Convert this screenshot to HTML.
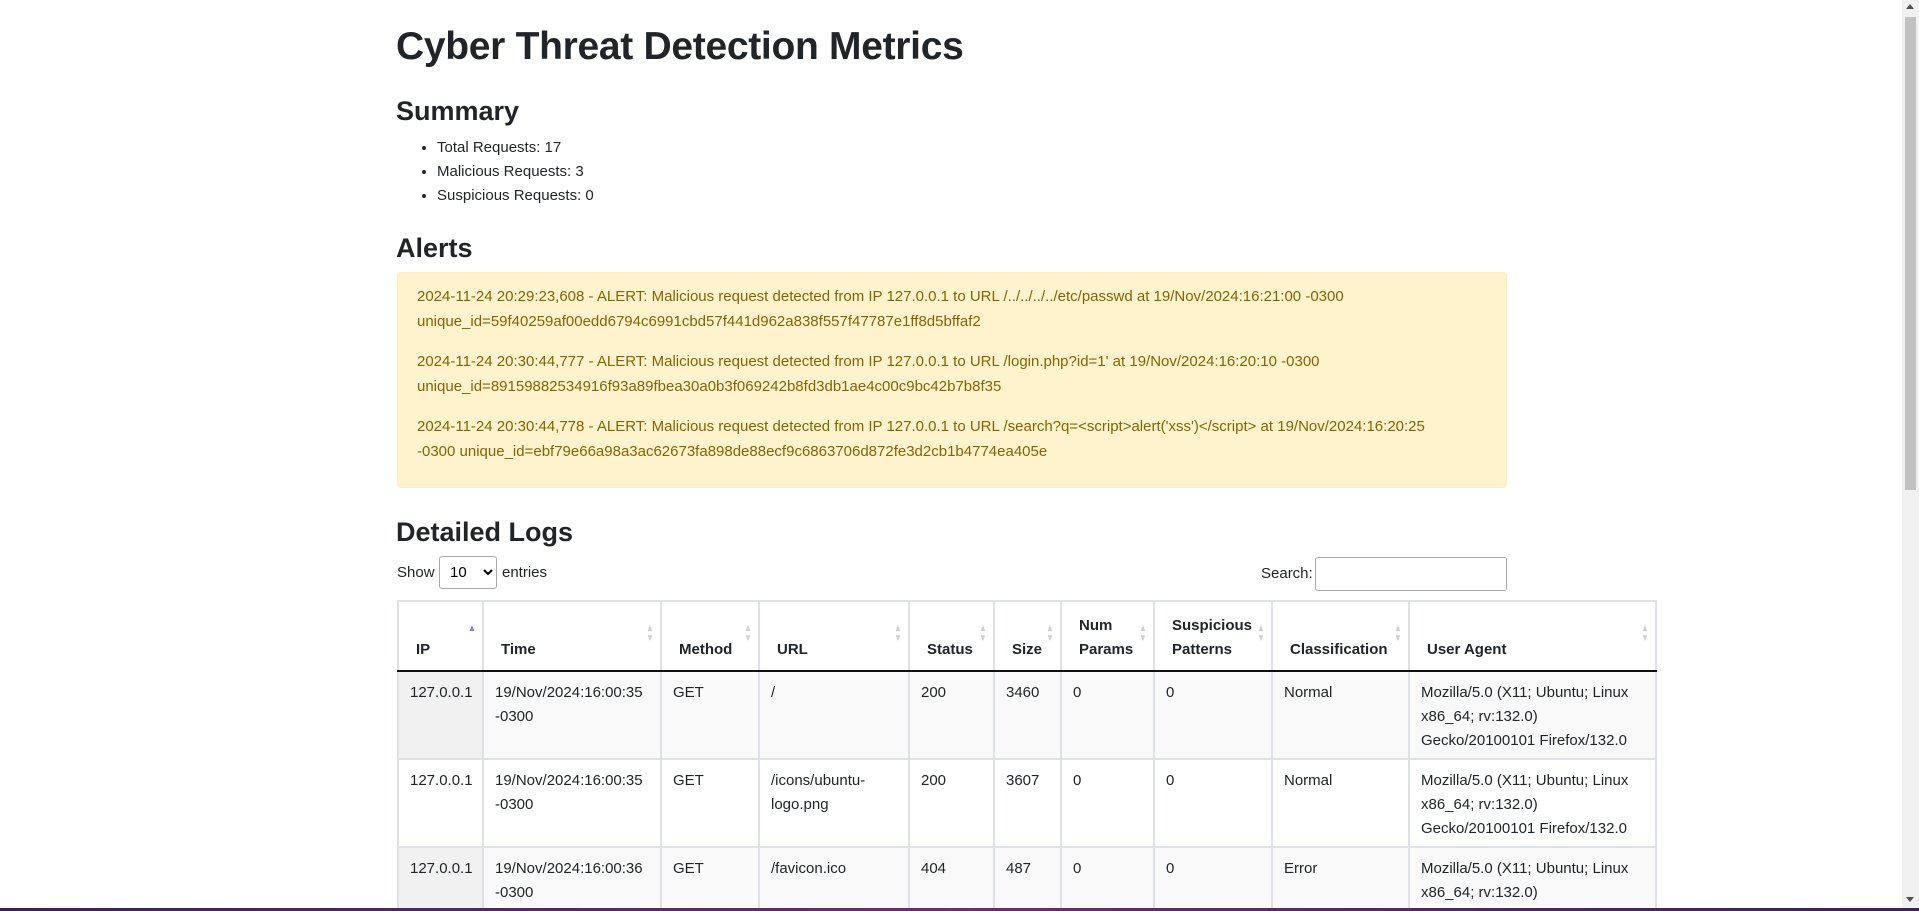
<!DOCTYPE html>
<html><head><meta charset="utf-8"><style>
*{box-sizing:border-box}
html,body{margin:0;padding:0;width:1919px;height:911px;overflow:hidden;background:#fff;font-family:"Liberation Sans",sans-serif;color:#212529}
#w{position:relative;width:1919px;height:911px;overflow:hidden}
.a{position:absolute;margin:0}
h1{font-size:39px;font-weight:600;line-height:48px;letter-spacing:-0.3px}
h3{font-size:27px;font-weight:600;line-height:34px}
ul{padding-left:40px;font-size:15px;line-height:24px}
.alert{left:397px;top:272px;width:1110px;height:216px;background:#fff3cd;border:1px solid #ffeeba;border-radius:4px;color:#856404;padding:12px 19px 11px;font-size:15px;line-height:24.5px;white-space:nowrap}
.alert p{margin:0 0 16px}
.ctl{font-size:15px;line-height:24px}
select{position:absolute;left:439px;top:556px;width:58px;height:33px;border:1px solid #aaa;border-radius:3px;background:#fff;font:15px "Liberation Sans",sans-serif;padding-left:6px}
.inp{left:1315px;top:557px;width:192px;height:34px;border:1px solid #aaa;border-radius:3px}
table{position:absolute;left:397px;top:600px;border-collapse:collapse;table-layout:fixed;width:1258px;font-size:15px;border:2px solid #dee2e6}
th,td{border:2px solid #dee2e6;text-align:left;vertical-align:top;white-space:nowrap;line-height:24px}
th{vertical-align:bottom;height:70px;border-bottom:2px solid #111;position:relative;font-weight:700;padding:8px 11px 8px 17px}
td{height:86px;padding:9px 11px 5px}
tr.o td{background:#f9f9f9}
tr.o td.s{background:#f1f1f1}
.srt{position:absolute;right:5px;top:22px;font-size:10px;line-height:10px;color:#cfcfcf;transform:scaleX(0.8)}
.srt.act{color:#7783d6}
</style></head><body><div id="w">
<h1 class="a" style="left:396px;top:23px">Cyber Threat Detection Metrics</h1>
<h3 class="a" style="left:396px;top:94px">Summary</h3>
<ul class="a" style="left:397px;top:136px"><li>Total Requests: 17</li><li>Malicious Requests: 3</li><li>Suspicious Requests: 0</li></ul>
<h3 class="a" style="left:396px;top:231px">Alerts</h3>
<div class="a alert">
<p>2024-11-24 20:29:23,608 - ALERT: Malicious request detected from IP 127.0.0.1 to URL /../../../../etc/passwd at 19/Nov/2024:16:21:00 -0300<br>unique_id=59f40259af00edd6794c6991cbd57f441d962a838f557f47787e1ff8d5bffaf2</p>
<p>2024-11-24 20:30:44,777 - ALERT: Malicious request detected from IP 127.0.0.1 to URL /login.php?id=1' at 19/Nov/2024:16:20:10 -0300<br>unique_id=89159882534916f93a89fbea30a0b3f069242b8fd3db1ae4c00c9bc42b7b8f35</p>
<p>2024-11-24 20:30:44,778 - ALERT: Malicious request detected from IP 127.0.0.1 to URL /search?q=&lt;script&gt;alert('xss')&lt;/script&gt; at 19/Nov/2024:16:20:25<br>-0300 unique_id=ebf79e66a98a3ac62673fa898de88ecf9c6863706d872fe3d2cb1b4774ea405e</p>
</div>
<h3 class="a" style="left:396px;top:515px">Detailed Logs</h3>
<div class="a ctl" style="left:397px;top:561px">Show</div>
<select><option>10</option></select>
<div class="a ctl" style="left:502px;top:561px">entries</div>
<div class="a ctl" style="left:1261px;top:562px">Search:</div>
<div class="a inp"></div>
<table>
<colgroup><col style="width:85px"><col style="width:178px"><col style="width:98px"><col style="width:150px"><col style="width:85px"><col style="width:67px"><col style="width:93px"><col style="width:118px"><col style="width:137px"><col style="width:247px"></colgroup>
<tr><th>IP<span class="srt act">▲</span></th><th>Time<span class="srt">▲<br>▼</span></th><th>Method<span class="srt">▲<br>▼</span></th><th>URL<span class="srt">▲<br>▼</span></th><th>Status<span class="srt">▲<br>▼</span></th><th>Size<span class="srt">▲<br>▼</span></th><th>Num<br>Params<span class="srt">▲<br>▼</span></th><th>Suspicious<br>Patterns<span class="srt">▲<br>▼</span></th><th>Classification<span class="srt">▲<br>▼</span></th><th>User Agent<span class="srt">▲<br>▼</span></th></tr>
<tr class="o"><td class="s">127.0.0.1</td><td>19/Nov/2024:16:00:35<br>-0300</td><td>GET</td><td>/</td><td>200</td><td>3460</td><td>0</td><td>0</td><td>Normal</td><td>Mozilla/5.0 (X11; Ubuntu; Linux<br>x86_64; rv:132.0)<br>Gecko/20100101 Firefox/132.0</td></tr>
<tr><td class="s">127.0.0.1</td><td>19/Nov/2024:16:00:35<br>-0300</td><td>GET</td><td>/icons/ubuntu-<br>logo.png</td><td>200</td><td>3607</td><td>0</td><td>0</td><td>Normal</td><td>Mozilla/5.0 (X11; Ubuntu; Linux<br>x86_64; rv:132.0)<br>Gecko/20100101 Firefox/132.0</td></tr>
<tr class="o"><td class="s">127.0.0.1</td><td>19/Nov/2024:16:00:36<br>-0300</td><td>GET</td><td>/favicon.ico</td><td>404</td><td>487</td><td>0</td><td>0</td><td>Error</td><td>Mozilla/5.0 (X11; Ubuntu; Linux<br>x86_64; rv:132.0)<br>Gecko/20100101 Firefox/132.0</td></tr>
</table>
<div class="a" style="left:1902px;top:0;width:17px;height:908px;background:#f1f1f1"></div>
<div class="a" style="left:1905px;top:17px;width:11px;height:473px;background:#c1c1c1"></div>
<div class="a" style="left:1906px;top:4px;width:0;height:0;border-left:4px solid transparent;border-right:4px solid transparent;border-bottom:5px solid #505050"></div>
<div class="a" style="left:1906px;top:897px;width:0;height:0;border-left:4px solid transparent;border-right:4px solid transparent;border-top:5px solid #505050"></div>
<div class="a" style="left:0;top:908px;width:1919px;height:3px;background:linear-gradient(90deg,#3b2356,#6a2d6e,#3b2356)"></div>
</div></body></html>
